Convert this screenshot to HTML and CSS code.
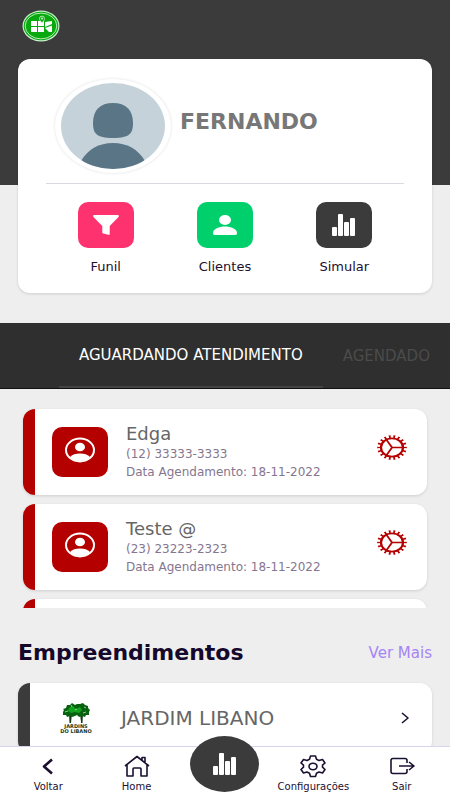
FILE: index.html
```html
<!DOCTYPE html>
<html lang="pt-BR">
<head>
<meta charset="utf-8">
<meta name="viewport" content="width=device-width, initial-scale=1">
<title>Painel</title>
<link rel="stylesheet" href="styles.css">
</head>
<body>
<svg class="defs" aria-hidden="true">
  <symbol id="bars" viewBox="0 0 24 24">
    <rect x="0" y="14" width="5" height="9" rx="1"/><rect x="6" y="1" width="5" height="22" rx="1"/><rect x="12" y="9" width="5" height="14" rx="1"/><rect x="18" y="5" width="5" height="18" rx="1"/>
  </symbol>
  <symbol id="contact" viewBox="0 0 32 26">
    <ellipse cx="16" cy="13" rx="14" ry="11.400" fill="none" stroke="currentColor" stroke-width="2"/>
    <ellipse cx="16" cy="10" rx="5" ry="4.300"/>
    <path d="M6 20C8 17.500 12 16.500 16 16.500s8 1 10 3.500c-3 3-6 4-10 4s-7-1-10-4z"/>
  </symbol>
  <symbol id="cog" viewBox="0 0 30 30" preserveAspectRatio="none">
    <g fill="none" stroke="currentColor">
      <circle cx="15" cy="15" r="11" stroke-width="2.200"/>
      <circle cx="15" cy="15" r="13" stroke-width="3.600" pathLength="90" stroke-dasharray="2 3" stroke-dashoffset="1"/>
      <path d="M15 15h11M15 15L9 5M15 15L9 25" stroke-width="1.800"/>
    </g>
  </symbol>
</svg>
<div class="app">
  <main class="content">
    <header class="hero">
      <svg class="brand" viewBox="0 0 38 32" role="img" aria-label="Logo">
        <ellipse cx="19" cy="16" rx="18.500" ry="15.500" fill="#c9f0cb"/>
        <ellipse cx="19" cy="16" rx="17.300" ry="14.300" fill="#08a80f"/>
        <ellipse cx="19" cy="16" rx="15.800" ry="12.900" fill="#08a80f" stroke="#c9f0cb" stroke-width=".9"/>
        <path d="M9 11h6v5H9zM16 11h6v5h-6zM9 17h6v5H9zM16 17h6v5h-6zM23 12l7-1v3l-7 3zM23 18l7-2.500V22h-3z" fill="#fff"/>
        <path d="M20 13c-1.600-2-2.500-3-2.500-4.400a2.500 2.500 0 0 1 5 0C22.500 10 21.500 11 20 13z" fill="#08a80f" stroke="#d9f5da" stroke-width=".8"/>
        <circle cx="20" cy="8.600" r="1" fill="#d9f5da"/>
      </svg>
    </header>

    <section class="profile">
      <div class="identity">
        <svg class="avatar" viewBox="0 0 104 86" preserveAspectRatio="none" aria-hidden="true">
          <rect width="104" height="86" fill="#c5d2da"/>
          <path d="M52 20c13 0 20 7 20 20 0 10-3 15-20 15s-20-5-20-15c0-13 7-20 20-20z" fill="#5a7686"/>
          <path d="M20 78c7-12 18-18 32-18s25 6 32 18v8H20z" fill="#5a7686"/>
        </svg>
        <h1 class="name">FERNANDO</h1>
      </div>
      <nav class="shortcuts" aria-label="Atalhos">
        <a class="shortcut" href="#funil">
          <span class="tile tile-pink"><svg width="26" height="20" viewBox="0 0 28 20" preserveAspectRatio="none"><path d="M1 0h26c1 0 1 1 .5 2L18 11v8c0 1-1 1-1.500.700L11 18.500c-.700-.300-1-.500-1-1V11L.500 2C0 1 0 0 1 0z"/></svg></span>
          Funil
        </a>
        <a class="shortcut" href="#clientes">
          <span class="tile tile-green"><svg width="24" height="20" viewBox="0 0 24 20"><ellipse cx="12" cy="5" rx="6" ry="5"/><path d="M0 18c0-4 6-6.500 12-6.500S24 14 24 18c0 1-.500 2-1.500 2h-21C.500 20 0 19 0 18z"/></svg></span>
          Clientes
        </a>
        <a class="shortcut" href="#simular">
          <span class="tile tile-dark"><svg width="24" height="24"><use href="#bars"/></svg></span>
          Simular
        </a>
      </nav>
    </section>

    <div class="tabs" role="tablist">
      <button class="tab tab-active" role="tab" aria-selected="true">AGUARDANDO ATENDIMENTO</button>
      <button class="tab" role="tab" aria-selected="false">AGENDADO</button>
    </div>

    <div class="leads">
      <article class="lead">
        <span class="badge"><svg width="32" height="26"><use href="#contact"/></svg></span>
        <div class="lead-text">
          <h2 class="lead-name">Edga</h2>
          <p>(12) 33333-3333</p>
          <p>Data Agendamento: 18-11-2022</p>
        </div>
        <button class="cog" aria-label="Opções"><svg width="30" height="25"><use href="#cog"/></svg></button>
      </article>
      <article class="lead">
        <span class="badge"><svg width="32" height="26"><use href="#contact"/></svg></span>
        <div class="lead-text">
          <h2 class="lead-name">Teste @</h2>
          <p>(23) 23223-2323</p>
          <p>Data Agendamento: 18-11-2022</p>
        </div>
        <button class="cog" aria-label="Opções"><svg width="30" height="25"><use href="#cog"/></svg></button>
      </article>
      <article class="lead"></article>
    </div>

    <section class="projects">
      <div class="section-head">
        <h2 class="section-title">Empreendimentos</h2>
        <a class="more" href="#todos">Ver Mais</a>
      </div>
      <a class="project" href="#jardim-libano">
        <span class="project-logo">
          <svg width="28" height="21" viewBox="0 0 28 21" aria-hidden="true">
            <path d="M7 10h3l-1 10H7.500zM18 10h3l-.500 10H19z" fill="#143b16"/>
            <path d="M1 9l1-2-1-1 3-1 1-3 3 0 2-2 3 2 2-1 3 0 3-1 2 2 3 1 0 2 2 2-1 2 0 3-3 0-1 2-3-1-3 1-2-2-2 1-3 1-2-1-3 1-1-2-3 0z" fill="#07620f"/>
            <path d="M7 5l4-2 3 3 4-2 2 3-3 3-4-1-4 1-3-2z" fill="#12a31d"/>
            <path d="M3 9l3-1M9 2l1 2M22 4l2 1M21 10l3-1M13 7l2-1" stroke="#b7e3b9" stroke-width=".8"/>
            <path d="M10 19c1-4 2-6 4-6s4 2 5 6z" fill="#fff"/>
          </svg>
          <span>JARDINS<br>DO LIBANO</span>
        </span>
        <span class="project-name">JARDIM LIBANO</span>
        <svg class="stroke" width="8" height="12" viewBox="0 0 8 12" aria-hidden="true"><path d="M1 1l6 5-6 5"/></svg>
      </a>
    </section>
  </main>

  <nav class="bottom" aria-label="Principal">
    <a class="item" href="#voltar">
      <svg class="stroke bold" width="28" height="24" viewBox="0 0 28 24"><path d="M18 5.500L10 12.500l8 7"/></svg>
      Voltar
    </a>
    <a class="item" href="#home">
      <svg class="stroke" width="28" height="24" viewBox="0 0 28 24"><path d="M2 12L14 2.500 26 12M4 11v11h6v-7c0-1 .500-1 1-1h6c1 0 1 0 1 1v7h6V11M19 6V3.500h3V9"/></svg>
      Home
    </a>
    <a class="main-action" href="#simular" aria-label="Simular"><svg width="24" height="24"><use href="#bars"/></svg></a>
    <a class="item" href="#configuracoes">
      <svg class="stroke" width="28" height="24" viewBox="0 0 28 24"><path d="M11.500 2h5l1 3.300 2.500 1.200 3.500-1L26 9l-2.500 2.200v2L26 15.500 23.500 19l-3.500-1-2.500 1.200-1 3.300h-5l-1-3.300L8 18l-3.500 1L2 15.500l2.500-2.300v-2L2 9l2.500-3.500 3.500 1 2.500-1.200z"/><ellipse cx="14" cy="12.500" rx="4" ry="3.300"/></svg>
      Configurações
    </a>
    <a class="item" href="#sair">
      <svg class="stroke" width="28" height="24" viewBox="0 0 28 24"><path d="M19 9V6.500C19 5 18.500 4.500 17 4.500H5C3.500 4.500 3 5 3 6.500v11c0 1.500.500 2 2 2h12c1.500 0 2-.500 2-2V15M11 12h14M21 8l5 4-5 4"/></svg>
      Sair
    </a>
  </nav>
</div>
</body>
</html>
```
FILE: styles.css
```css
* { box-sizing: border-box; }

body {
  margin: 0;
  background: #eee;
  color: #1b1030;
  font-family: "DejaVu Sans", Inter, sans-serif;
  font-size: 12px;
  line-height: 18px;
}

h1, h2, p { margin: 0; font-weight: 400; }
a { color: inherit; text-decoration: none; }
svg { display: block; fill: currentColor; }
button { border: 0; background: none; font: inherit; cursor: pointer; }

.defs { display: none; }

.app { display: flex; flex-direction: column; height: 100vh; }
.content { flex: 1; min-height: 0; overflow-y: auto; scrollbar-width: none; }

.hero { height: 185px; padding: 10px 22px; background: #3b3b3b; }
.brand { width: 38px; height: 32px; }

.profile {
  position: relative;
  margin: -126px 18px 0;
  padding: 20px 28px 17px;
  border-radius: 12px;
  background: #fff;
  box-shadow: 0 1px 3px #0002;
}
.identity {
  display: flex;
  align-items: center;
  gap: 9px;
  padding: 0 9px 10px;
  border-bottom: 1px solid #d9d9e6;
}
.avatar {
  width: 116px;
  height: 94px;
  padding: 4px 6px;
  border-radius: 50%;
  background: #fff;
  box-shadow: 0 0 3px #0002;
}
.name { color: #777; font-size: 22px; font-weight: 700; line-height: 24px; padding-bottom: 8px; }

.shortcuts { display: grid; grid-template-columns: repeat(3, 1fr); padding-top: 18px; }
.shortcut { display: flex; flex-direction: column; align-items: center; gap: 10px; font-size: 13px; }
.tile {
  display: flex;
  align-items: center;
  justify-content: center;
  width: 56px;
  height: 46px;
  border-radius: 10px;
  color: #fff;
}
.tile-pink { background: #ff3270; }
.tile-green { background: #00d06c; }
.tile-dark { background: #3b3b3b; }

.tabs {
  display: flex;
  height: 66px;
  margin-top: 30px;
  padding-left: 59px;
  overflow: hidden;
  background: #2f2f2f;
  border-bottom: 1px solid #111;
  font-size: 15px;
}
.tab { flex: none; padding: 0 20px; color: #4b4b4b; }
.tab-active { color: #fff; border-bottom: 2px solid #444; }

.leads {
  display: flex;
  flex-direction: column;
  gap: 9px;
  height: 219px;
  margin-bottom: 32px;
  padding: 20px 23px 0;
  overflow: hidden;
}
.lead {
  display: flex;
  flex: none;
  align-items: center;
  height: 86px;
  padding: 0 20px 0 17px;
  border-left: 12px solid #b50000;
  border-radius: 12px;
  background: #fff;
  box-shadow: 0 1px 3px #0002;
}
.badge {
  display: flex;
  justify-content: center;
  width: 56px;
  height: 50px;
  padding-top: 10px;
  border-radius: 10px;
  background: #b50000;
  color: #fff;
}
.lead-text { flex: 1; margin-left: 18px; color: #85768f; }
.lead-name { color: #666; font-size: 18px; line-height: 22px; }
.cog { padding: 0 0 10px; color: #b50000; }

.section-head { display: flex; align-items: center; justify-content: space-between; padding: 0 18px; }
.section-title { font-size: 22px; font-weight: 700; line-height: 26px; color: #15082b; }
.more { color: #a584f6; font-size: 15px; }

.project {
  display: flex;
  align-items: center;
  margin: 17px 18px 20px;
  height: 70px;
  padding: 0 23px 0 32px;
  border-left: 12px solid #3b3b3b;
  border-radius: 12px;
  background: #fff;
  box-shadow: 0 1px 3px #0002;
}
.project-logo {
  display: flex;
  flex-direction: column;
  align-items: center;
  width: 28px;
  color: #183a1c;
  font-size: 5px;
  font-weight: 700;
  line-height: 5px;
  text-align: center;
  white-space: nowrap;
}
.project-name { flex: 1; margin-left: 31px; color: #666; font-size: 20px; }

.stroke { fill: none; stroke: currentColor; stroke-width: 1.6; stroke-linejoin: round; }
.bold { stroke-width: 2.6; }

.bottom {
  display: grid;
  grid-template-columns: repeat(5, 1fr);
  height: 54px;
  padding: 0 4px;
  border-top: 1px solid #d8d4ee;
  background: #fff;
}
.item {
  display: flex;
  flex-direction: column;
  align-items: center;
  gap: 3px;
  padding-top: 7px;
  color: #1b1030;
  font-size: 10px;
  line-height: 12px;
}
.main-action {
  position: relative;
  display: flex;
  align-items: center;
  justify-content: center;
  justify-self: center;
  width: 69px;
  height: 56px;
  margin-top: -11px;
  border-radius: 50%;
  background: #3b3b3b;
  color: #fff;
}
```
